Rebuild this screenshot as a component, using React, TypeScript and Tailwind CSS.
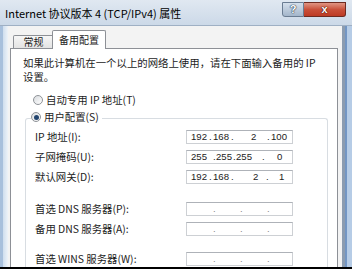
import React from "react";

function Radio({ checked }: { checked?: boolean }) {
  return (
    <div className="w-[10px] h-[10px] rounded-full border border-[#8f9398] bg-gradient-to-br from-[#d9dcdf] to-[#ffffff] flex items-center justify-center shrink-0">
      {checked ? <div className="w-[5px] h-[5px] rounded-full bg-[#23456f]" /> : null}
    </div>
  );
}

function Row({ label, children, className }: { label: string; children: React.ReactNode; className: string }) {
  return (
    <div className={"flex items-center h-[14px] " + className}>
      <div className="w-[151px] shrink-0 text-[10.4px] leading-[14px] whitespace-nowrap">{label}</div>
      <div className="w-[107px] h-[14px] shrink-0 border border-[#cdd0d4] border-t-[#aeb2b8] bg-white flex items-center pl-[4px] text-[9.6px] leading-[12px] font-['Liberation_Sans',sans-serif] text-[#222]">
        {children}
      </div>
    </div>
  );
}

function Empty() {
  return (
    <>
      <span className="w-[22px] shrink-0" />
      <span className="w-[27px] shrink-0 text-[#888]">.</span>
      <span className="w-[27px] shrink-0 text-[#888]">.</span>
      <span className="shrink-0 text-[#888]">.</span>
    </>
  );
}

export default function App() {
  return (
    <div className="w-[352px] h-[269px] flex flex-col overflow-hidden bg-[#c3d6eb] font-['Noto_Sans_CJK_SC',sans-serif] text-[#1c1c1c]">
      {/* title bar */}
      <div className="h-[26px] shrink-0 flex items-start bg-gradient-to-b from-[#e0e8f1] to-[#ccd9e8] border-b border-[#9fb0c4]">
        <div className="pl-[5px] pt-[6px] text-[11px] leading-[14px] whitespace-nowrap text-black">
          Internet 协议版本 4 (TCP/IPv4) 属性
        </div>
        <div className="ml-auto mr-[6px] mt-[2px] flex">
          <div className="w-[22px] h-[15px] border border-[#6a7c92] rounded-bl-[3px] bg-gradient-to-b from-[#d4dfeb] to-[#a4b6cb] flex items-center justify-center text-[11px] font-bold leading-none text-white font-['Liberation_Sans',sans-serif] [text-shadow:0_0_1px_#2a3b50,0_0_1px_#2a3b50,0_0_1px_#2a3b50]">
            ?
          </div>
          <div className="w-[42px] h-[15px] border border-[#6e2a20] border-l-0 rounded-br-[3px] bg-gradient-to-b from-[#df9483] via-[#c9503a] to-[#bd3a24] flex items-center justify-center text-[11px] font-bold leading-none text-white font-['Liberation_Sans',sans-serif] [text-shadow:0_0_1px_#4a1208,0_0_1px_#4a1208,0_0_1px_#4a1208]">
            x
          </div>
        </div>
      </div>

      {/* middle */}
      <div className="flex-1 min-h-0 flex">
        <div className="w-[3px] shrink-0 bg-[#a8c0dc]" />
        <div className="w-[5px] shrink-0 bg-gradient-to-r from-[#cfdeee] to-[#eef3f8]" />
        <div className="flex-1 min-w-0 bg-[#f3f3f3] flex flex-col pl-[2px] pr-[4px]">
          {/* tabs */}
          <div className="h-[22px] shrink-0 flex items-end pl-[3px]">
            <div className="w-[41px] h-[13px] border border-b-0 border-[#8d9096] rounded-t-[2px] bg-gradient-to-b from-[#f6f6f6] to-[#e3e3e3] flex items-center justify-center text-[10px] leading-none">
              常规
            </div>
            <div className="relative z-10 -ml-[2px] -mb-[1px] w-[54px] h-[19px] border border-b-0 border-[#8d9096] rounded-t-[2px] bg-white flex items-center justify-center text-[10px] leading-none">
              备用配置
            </div>
          </div>
          {/* panel */}
          <div className="flex-1 min-h-0 bg-white border border-b-0 border-[#8d9096] overflow-hidden">
            <div className="mt-[7px] pl-[12px] text-[10.4px] leading-[14px] whitespace-nowrap">
              如果此计算机在一个以上的网络上使用，请在下面输入备用的 IP
              <br />
              设置。
            </div>
            <div className="mt-[9px] pl-[22px] h-[14px] flex items-center gap-[3px] text-[10.4px] leading-[14px] whitespace-nowrap">
              <Radio />
              <span>自动专用 IP 地址(T)</span>
            </div>
            <div className="mt-[11px] ml-[14px] mr-[9px] border border-b-0 border-[#d8dde2] rounded-t-[3px] h-[200px]">
              <div className="-mt-[9px] ml-[5px] w-fit bg-white pr-[3px] h-[14px] flex items-center gap-[3px] text-[10.4px] leading-[14px] whitespace-nowrap">
                <Radio checked />
                <span>用户配置(S)</span>
              </div>
              <div className="pl-[9px]">
                <Row label="IP 地址(I):" className="mt-[6px]">
                  <span className="w-[18px] shrink-0">192</span>
                  <span className="w-[4px] shrink-0">.</span>
                  <span className="w-[18px] shrink-0">168</span>
                  <span className="w-[20px] shrink-0">.</span>
                  <span className="w-[16px] shrink-0">2</span>
                  <span className="w-[4px] shrink-0">.</span>
                  <span className="shrink-0">100</span>
                </Row>
                <Row label="子网掩码(U):" className="mt-[6px]">
                  <span className="w-[22px] shrink-0">255</span>
                  <span className="w-[3px] shrink-0">.</span>
                  <span className="w-[17px] shrink-0">255</span>
                  <span className="w-[3px] shrink-0">.</span>
                  <span className="w-[26px] shrink-0">255</span>
                  <span className="w-[15px] shrink-0">.</span>
                  <span className="shrink-0">0</span>
                </Row>
                <Row label="默认网关(D):" className="mt-[6px]">
                  <span className="w-[18px] shrink-0">192</span>
                  <span className="w-[4px] shrink-0">.</span>
                  <span className="w-[18px] shrink-0">168</span>
                  <span className="w-[22px] shrink-0">.</span>
                  <span className="w-[13px] shrink-0">2</span>
                  <span className="w-[13px] shrink-0">.</span>
                  <span className="shrink-0">1</span>
                </Row>
                <Row label="首选 DNS 服务器(P):" className="mt-[18px]">
                  <Empty />
                </Row>
                <Row label="备用 DNS 服务器(A):" className="mt-[6px]">
                  <Empty />
                </Row>
                <Row label="首选 WINS 服务器(W):" className="mt-[16px]">
                  <Empty />
                </Row>
              </div>
            </div>
          </div>
        </div>
        <div className="w-[3px] shrink-0 bg-[#8c9cb0]" />
        <div className="w-[2px] shrink-0 bg-[#7396c4]" />
        <div className="w-[5px] shrink-0 bg-[#b6cce6]" />
      </div>
      <div className="h-[2px] shrink-0 bg-black" />
    </div>
  );
}
